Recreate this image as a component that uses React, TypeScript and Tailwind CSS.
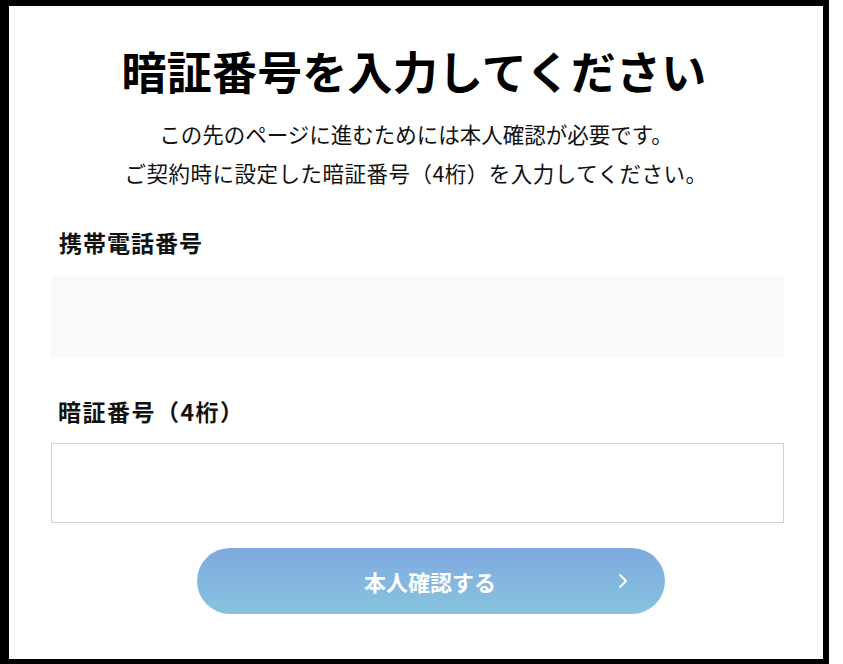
import React from 'react';

const jp = { fontFamily: '"Noto Sans CJK JP", "Noto Sans", sans-serif' };

const Chevron: React.FC = () => (
    <svg width="12" height="18" viewBox="0 0 12 18" fill="none">
        <path d="M3 3l6 6-6 6" stroke="white" strokeWidth="2" strokeLinecap="round" strokeLinejoin="round" />
    </svg>
);

const App: React.FC = () => (
    <div className="w-[843px] h-[664px] bg-white" style={jp}>
        <div className="w-[829px] h-[664px] border-l-[9px] border-t-[6px] border-r-[6px] border-b-[5px] border-black bg-white">
            <div className="flex flex-col items-center pt-[38px]">
                <h1 className="text-[45px] leading-[54px] font-bold text-black tracking-[0.2px] pr-[4px]">暗証番号を入力してください</h1>
                <div className="mt-[16px] text-[21.5px] leading-[39px] text-[#111] text-center">
                    <p>この先のページに進むためには本人確認が必要です。</p>
                    <p className="tracking-[0.5px]">ご契約時に設定した暗証番号（4桁）を入力してください。</p>
                </div>
            </div>
            <div className="ml-[42px] w-[733px]">
                <label className="block mt-[34px] pl-2 text-[23px] leading-[32px] font-bold text-[#111] tracking-[1px]">携帯電話番号</label>
                <div className="mt-[18px] h-[82px] bg-[#f8f9fb]" />
                <label className="block mt-[37px] pl-[7px] text-[23px] leading-[32px] font-bold text-[#111] tracking-[1.5px]">暗証番号（4桁）</label>
                <input
                    type="password"
                    className="block mt-[16px] w-full h-[80px] border border-[#d0d0d0] bg-white outline-none px-4 text-xl"
                />
            </div>
            <div className="mt-[25px] flex justify-center pl-[30px]">
                <button className="relative w-[468px] h-[66px] rounded-full bg-gradient-to-b from-[#7ea9e1] to-[#87c4dd] text-white text-[22px] font-bold flex items-center justify-center pr-[2px]">
                    本人確認する
                    <span className="absolute right-[36px] top-1/2 -translate-y-1/2 flex">
                        <Chevron />
                    </span>
                </button>
            </div>
        </div>
    </div>
);

export default App;
